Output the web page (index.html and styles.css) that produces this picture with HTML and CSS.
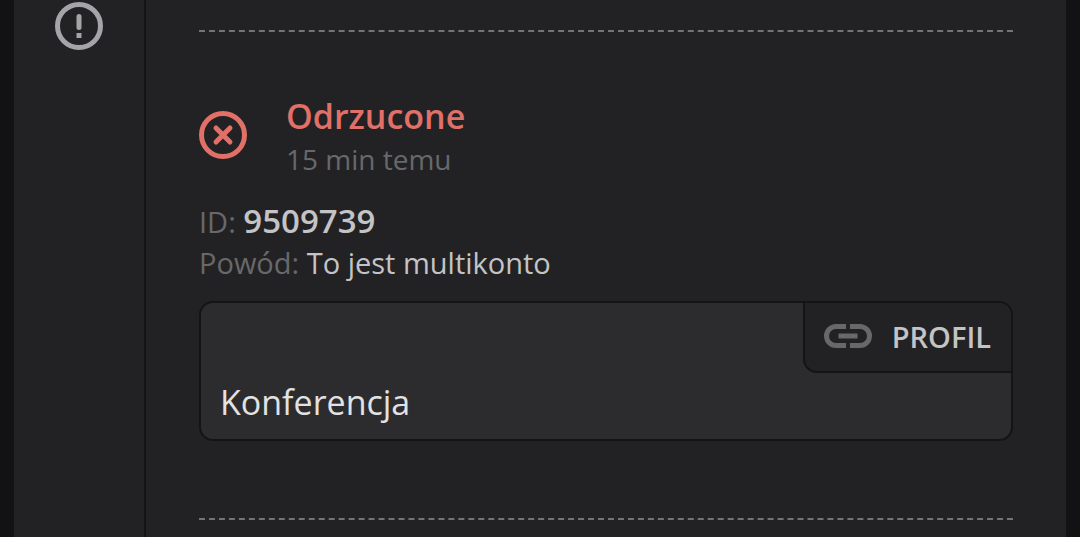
FILE: index.html
```html
<!DOCTYPE html>
<html lang="pl">
<head>
    <meta charset="UTF-8">
    <meta name="viewport" content="width=device-width, initial-scale=1">
    <title>Powiadomienia</title>
    <link rel="stylesheet" href="styles.css">
</head>
<body>
    <div class="panel">
        <aside class="sidebar">
            <svg class="icon" viewBox="0 0 48 48" role="img" aria-label="Uwaga">
                <circle cx="24" cy="24" r="21.5" fill="none" stroke="currentColor" stroke-width="5"/>
                <path d="M24 14.5v11" fill="none" stroke="currentColor" stroke-width="5" stroke-linecap="round"/>
                <path d="M21.5 31h5v5h-5z" fill="currentColor"/>
            </svg>
        </aside>
        <main class="reports">
            <article class="report">
                <header class="report-header">
                    <svg class="icon" viewBox="0 0 48 48" aria-hidden="true">
                        <circle cx="24" cy="24" r="21.5" fill="none" stroke="currentColor" stroke-width="5"/>
                        <path d="M17 17l14 14M31 17l-14 14" fill="none" stroke="currentColor" stroke-width="5" stroke-linecap="round"/>
                    </svg>
                    <div class="report-info">
                        <h2 class="report-status">Odrzucone</h2>
                        <p class="report-time">15 min temu</p>
                    </div>
                </header>
                <div class="report-details">
                    <p class="detail">ID: <strong class="report-id">9509739</strong></p>
                    <p class="detail">Powód: <span class="reason">To jest multikonto</span></p>
                </div>
                <div class="card">
                    <button class="profile-btn" type="button">
                        <svg class="icon link-icon" viewBox="0 0 48 24" aria-hidden="true">
                            <path d="M22 2.5H12a9.5 9.5 0 0 0 0 19h10M26 2.5h10a9.5 9.5 0 0 1 0 19H26M14.5 12h19" fill="none" stroke="currentColor" stroke-width="5"/>
                        </svg>
                        PROFIL
                    </button>
                    <p class="card-text">Konferencja</p>
                </div>
            </article>
            <article class="report"></article>
        </main>
    </div>
</body>
</html>
```
FILE: styles.css
```css
* {
    box-sizing: border-box;
}

body {
    margin: 0;
    padding: 0 14px;
    font-family: 'Open Sans', 'Noto Sans', sans-serif;
    background: #121214;
    color: #e2e2e4;
    overflow: hidden;
}

h2, p {
    margin: 0;
}

.panel {
    display: flex;
    min-height: 100vh;
    background: #222224;
}

.sidebar {
    flex: none;
    width: 132px;
    padding-top: 2px;
    border-right: 2px solid #141416;
    text-align: center;
    color: #a5a5a9;
}

.icon {
    flex: none;
    width: 48px;
    height: 48px;
}

.reports {
    flex: 1;
    padding: 30px 53px 0;
}

.report {
    padding: 59px 0 77px;
    border-top: 2px dashed #747476;
}

.report:last-child {
    padding: 0;
}

.report-header {
    display: flex;
    align-items: center;
    gap: 39px;
    color: #e07068;
}

.report-info {
    padding-top: 2px;
}

.report-status {
    font-size: 34px;
    line-height: 46px;
    font-weight: 600;
}

.report-time {
    font-size: 28px;
    line-height: 40px;
    color: #68686a;
}

.report-details {
    margin: 21px 0 18px;
}

.detail {
    font-size: 29px;
    line-height: 41px;
    color: #68686a;
}

.report-id {
    font-size: 33px;
    font-weight: 600;
    color: #c4c4c6;
}

.reason {
    color: #c4c4c6;
}

.card {
    display: flex;
    flex-direction: column;
    border: 2px solid #141416;
    border-radius: 14px;
    background: #2c2c2e;
    overflow: hidden;
}

.profile-btn {
    display: flex;
    align-items: center;
    align-self: flex-end;
    gap: 20px;
    height: 70px;
    padding: 0 20px 2px 19px;
    border: 0 solid #141416;
    border-width: 0 0 2px 2px;
    border-bottom-left-radius: 14px;
    background: #222224;
    font-family: inherit;
    font-size: 29px;
    font-weight: 600;
    color: #c4c4c6;
}

.link-icon {
    height: 24px;
    color: #68686a;
}

.card-text {
    padding: 6px 19px 14px;
    font-size: 34px;
    line-height: 46px;
}
```
